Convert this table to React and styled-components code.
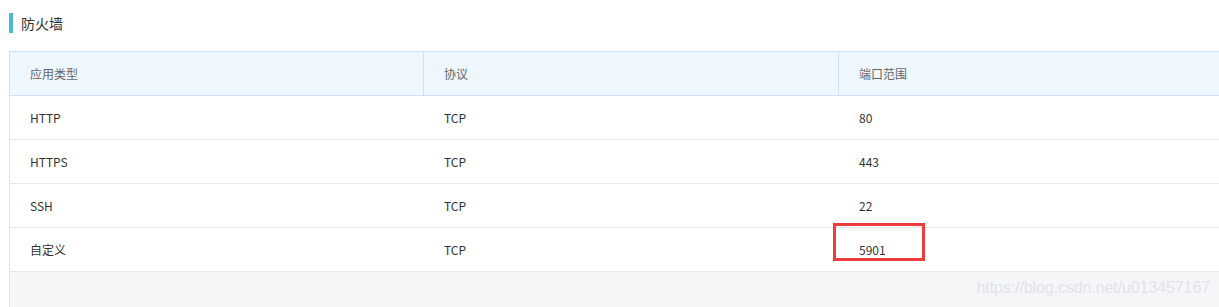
import React from "react";
import styled, { createGlobalStyle } from "styled-components";

const Global = createGlobalStyle`
  html, body { margin: 0; padding: 0; background: #fff; }
  body { font-family: "Noto Sans CJK SC", "Noto Sans", sans-serif; overflow: hidden; }
`;

const Page = styled.div`
  position: relative;
  width: 1219px;
  height: 307px;
  overflow: hidden;
  background: #fff;
`;

const TitleBar = styled.div`
  display: flex;
  align-items: center;
  height: 20px;
  margin: 13px 0 0 9px;
  padding-left: 8px;
  border-left: 4px solid #4cb8d9;
  font-size: 14px;
  color: #333;
  line-height: 20px;
`;

const TableWrap = styled.div`
  margin: 18px 0 0 9px;
  width: 1260px;
  height: 256px;
  background: #f5f6f8;
  border-left: 1px solid #e3e5e8;
`;

const Row = styled.div`
  display: grid;
  grid-template-columns: 414px 415px 415px;
  height: ${(p) => (p.$head ? "45px" : "44px")};
  background: ${(p) => (p.$head ? "#eef6fe" : "#fff")};
  border-bottom: 1px solid ${(p) => (p.$head ? "#cfe1f5" : "#e6e7e9")};
  border-top: ${(p) => (p.$head ? "1px solid #cfe1f5" : "none")};
  box-sizing: border-box;
  margin-left: ${(p) => (p.$head ? "-1px" : "0")};
  border-left: ${(p) => (p.$head ? "1px solid #cfe1f5" : "none")};
`;

const Cell = styled.div`
  display: flex;
  align-items: center;
  padding-left: 20px;
  font-size: 12px;
  color: ${(p) => (p.$head ? "#666" : "#333")};
  border-right: ${(p) => (p.$head ? "1px solid #cfe1f5" : "none")};
`;

const Mark = styled.div`
  position: absolute;
  left: 833px;
  top: 223px;
  width: 92px;
  height: 38px;
  box-sizing: border-box;
  border: 3px solid #ee3b3b;
  pointer-events: none;
`;

const Watermark = styled.div`
  position: absolute;
  right: 9px;
  top: 279px;
  font-family: "Liberation Sans", Arial, sans-serif;
  font-size: 16px;
  color: #e1e3e7;
  letter-spacing: -0.1px;
`;

const rows = [
  ["HTTP", "TCP", "80"],
  ["HTTPS", "TCP", "443"],
  ["SSH", "TCP", "22"],
  ["自定义", "TCP", "5901"],
];

export default function App() {
  return (
    <Page>
      <Global />
      <TitleBar>防火墙</TitleBar>
      <TableWrap>
        <Row $head>
          <Cell $head>应用类型</Cell>
          <Cell $head>协议</Cell>
          <Cell $head>端口范围</Cell>
        </Row>
        {rows.map((r) => (
          <Row key={r[0]}>
            {r.map((c, i) => (
              <Cell key={i}>{c}</Cell>
            ))}
          </Row>
        ))}
      </TableWrap>
      <Mark />
      <Watermark>https://blog.csdn.net/u013457167</Watermark>
    </Page>
  );
}
